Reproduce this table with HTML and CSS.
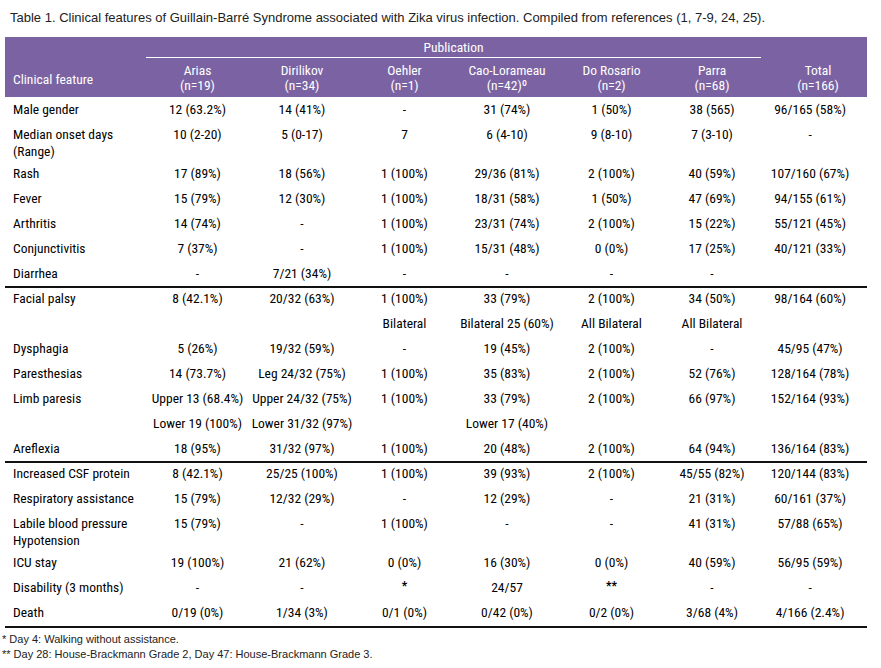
FILE: index.html
```html
<!DOCTYPE html>
<html>
<head>
<meta charset="utf-8">
<link rel="stylesheet" href="styles.css">
</head>
<body>
<div class="page">
  <p class="caption">Table 1. Clinical features of Guillain-Barré Syndrome associated with Zika virus infection. Compiled from references (1, 7-9, 24, 25).</p>
  <table class="tbl">
    <colgroup>
      <col class="c-label"><col class="c-arias"><col class="c-diri"><col class="c-oeh"><col class="c-cao"><col class="c-dor"><col class="c-parra"><col class="c-total">
    </colgroup>
    <thead>
      <tr>
        <th rowspan="2" class="h-label">Clinical feature</th>
        <th colspan="6" class="h-pub">Publication</th>
        <th rowspan="2" class="h-col">Total<br>(n=166)</th>
      </tr>
      <tr>
        <th class="h-col">Arias<br>(n=19)</th>
        <th class="h-col">Dirilikov<br>(n=34)</th>
        <th class="h-col">Oehler<br>(n=1)</th>
        <th class="h-col">Cao-Lorameau<br>(n=42)º</th>
        <th class="h-col">Do Rosario<br>(n=2)</th>
        <th class="h-col">Parra<br>(n=68)</th>
      </tr>
    </thead>
    <tbody>
      <tr><td>Male gender</td><td>12 (63.2%)</td><td>14 (41%)</td><td>-</td><td>31 (74%)</td><td>1 (50%)</td><td>38 (565)</td><td>96/165 (58%)</td></tr>
      <tr class="two"><td>Median onset days<br>(Range)</td><td>10 (2-20)</td><td>5 (0-17)</td><td>7</td><td>6 (4-10)</td><td>9 (8-10)</td><td>7 (3-10)</td><td>-</td></tr>
      <tr><td>Rash</td><td>17 (89%)</td><td>18 (56%)</td><td>1 (100%)</td><td>29/36 (81%)</td><td>2 (100%)</td><td>40 (59%)</td><td>107/160 (67%)</td></tr>
      <tr><td>Fever</td><td>15 (79%)</td><td>12 (30%)</td><td>1 (100%)</td><td>18/31 (58%)</td><td>1 (50%)</td><td>47 (69%)</td><td>94/155 (61%)</td></tr>
      <tr><td>Arthritis</td><td>14 (74%)</td><td>-</td><td>1 (100%)</td><td>23/31 (74%)</td><td>2 (100%)</td><td>15 (22%)</td><td>55/121 (45%)</td></tr>
      <tr><td>Conjunctivitis</td><td>7 (37%)</td><td>-</td><td>1 (100%)</td><td>15/31 (48%)</td><td>0 (0%)</td><td>17 (25%)</td><td>40/121 (33%)</td></tr>
      <tr><td>Diarrhea</td><td>-</td><td>7/21 (34%)</td><td>-</td><td>-</td><td>-</td><td>-</td><td></td></tr>
      <tr class="sep"><td>Facial palsy</td><td>8 (42.1%)</td><td>20/32 (63%)</td><td>1 (100%)</td><td>33 (79%)</td><td>2 (100%)</td><td>34 (50%)</td><td>98/164 (60%)</td></tr>
      <tr><td></td><td></td><td></td><td>Bilateral</td><td>Bilateral 25 (60%)</td><td>All Bilateral</td><td>All Bilateral</td><td></td></tr>
      <tr><td>Dysphagia</td><td>5 (26%)</td><td>19/32 (59%)</td><td>-</td><td>19 (45%)</td><td>2 (100%)</td><td>-</td><td>45/95 (47%)</td></tr>
      <tr><td>Paresthesias</td><td>14 (73.7%)</td><td>Leg 24/32 (75%)</td><td>1 (100%)</td><td>35 (83%)</td><td>2 (100%)</td><td>52 (76%)</td><td>128/164 (78%)</td></tr>
      <tr><td>Limb paresis</td><td>Upper 13 (68.4%)</td><td>Upper 24/32 (75%)</td><td>1 (100%)</td><td>33 (79%)</td><td>2 (100%)</td><td>66 (97%)</td><td>152/164 (93%)</td></tr>
      <tr><td></td><td>Lower 19 (100%)</td><td>Lower 31/32 (97%)</td><td></td><td>Lower 17 (40%)</td><td></td><td></td><td></td></tr>
      <tr><td>Areflexia</td><td>18 (95%)</td><td>31/32 (97%)</td><td>1 (100%)</td><td>20 (48%)</td><td>2 (100%)</td><td>64 (94%)</td><td>136/164 (83%)</td></tr>
      <tr class="sep"><td>Increased CSF protein</td><td>8 (42.1%)</td><td>25/25 (100%)</td><td>1 (100%)</td><td>39 (93%)</td><td>2 (100%)</td><td>45/55 (82%)</td><td>120/144 (83%)</td></tr>
      <tr><td>Respiratory assistance</td><td>15 (79%)</td><td>12/32 (29%)</td><td>-</td><td>12 (29%)</td><td>-</td><td>21 (31%)</td><td>60/161 (37%)</td></tr>
      <tr class="two"><td>Labile blood pressure<br>Hypotension</td><td>15 (79%)</td><td>-</td><td>1 (100%)</td><td>-</td><td>-</td><td>41 (31%)</td><td>57/88 (65%)</td></tr>
      <tr><td>ICU stay</td><td>19 (100%)</td><td>21 (62%)</td><td>0 (0%)</td><td>16 (30%)</td><td>0 (0%)</td><td>40 (59%)</td><td>56/95 (59%)</td></tr>
      <tr><td>Disability (3 months)</td><td>-</td><td>-</td><td class="star">*</td><td>24/57</td><td class="star">**</td><td>-</td><td>-</td></tr>
      <tr class="last"><td>Death</td><td>0/19 (0%)</td><td>1/34 (3%)</td><td>0/1 (0%)</td><td>0/42 (0%)</td><td>0/2 (0%)</td><td>3/68 (4%)</td><td>4/166 (2.4%)</td></tr>
    </tbody>
  </table>
  <div class="notes">
    <p>* Day 4: Walking without assistance.</p>
    <p>** Day 28: House-Brackmann Grade 2, Day 47: House-Brackmann Grade 3.</p>
  </div>
</div>
</body>
</html>
```

FILE: styles.css
```css
html, body {
  margin: 0;
  padding: 0;
  background: #ffffff;
}

.page {
  color: #111;
}

.caption {
  margin: 0;
  padding: 10px 0 0 10px;
  height: 37px;
  box-sizing: border-box;
  font-family: "Liberation Sans", Arial, sans-serif;
  font-size: 13px;
  line-height: 15px;
  color: #222;
}

.tbl {
  margin-left: 5px;
  width: 862px;
  border-collapse: collapse;
  table-layout: fixed;
  font-family: "Liberation Sans Narrow", "Arial Narrow", "Roboto Condensed", "Liberation Sans", sans-serif;
  font-size: 13.5px;
  color: #000;
}

.c-label { width: 141px; }
.c-arias { width: 103px; }
.c-diri { width: 106px; }
.c-oeh { width: 99px; }
.c-cao { width: 106px; }
.c-dor { width: 103px; }
.c-parra { width: 98px; }
.c-total { width: 106px; }

.tbl thead th {
  background: #7b63a3;
  color: #ffffff;
  font-weight: normal;
  padding: 0;
  line-height: 15px;
}

.tbl thead tr:first-child th.h-pub {
  height: 20px;
  box-sizing: border-box;
  padding: 3px 0 0 0;
  vertical-align: top;
  border-bottom: 1px solid #ffffff;
}

.tbl thead th.h-label {
  text-align: left;
  vertical-align: bottom;
  padding: 0 0 10px 8px;
}

.tbl thead th.h-col {
  text-align: center;
  vertical-align: bottom;
  padding: 5px 0 4px 0;
}

.tbl thead tr:first-child th.h-col {
  padding-left: 8px;
}

.tbl tbody td {
  padding: 4px 0 4px 0;
  line-height: 17px;
  height: 17px;
  text-align: center;
  vertical-align: top;
  white-space: nowrap;
}

.tbl tbody td:first-child {
  text-align: left;
  padding-left: 8px;
}

.tbl tbody td:last-child {
  padding-right: 8px;
}

.tbl tbody tr.two td {
  padding-bottom: 1px;
}

.tbl tbody tr.sep td {
  border-top: 2px solid #111;
  padding-top: 2px;
}

.tbl tbody tr.last td {
  border-bottom: 2px solid #111;
  padding-bottom: 5px;
}

.tbl tbody td.star {
  font-weight: bold;
  font-size: 12px;
  line-height: 15px;
}

.notes {
  margin-top: 4px;
  padding-left: 2px;
  font-family: "Liberation Sans", Arial, sans-serif;
  font-size: 11px;
  line-height: 15px;
  color: #222;
}

.notes p {
  margin: 0;
}
```
